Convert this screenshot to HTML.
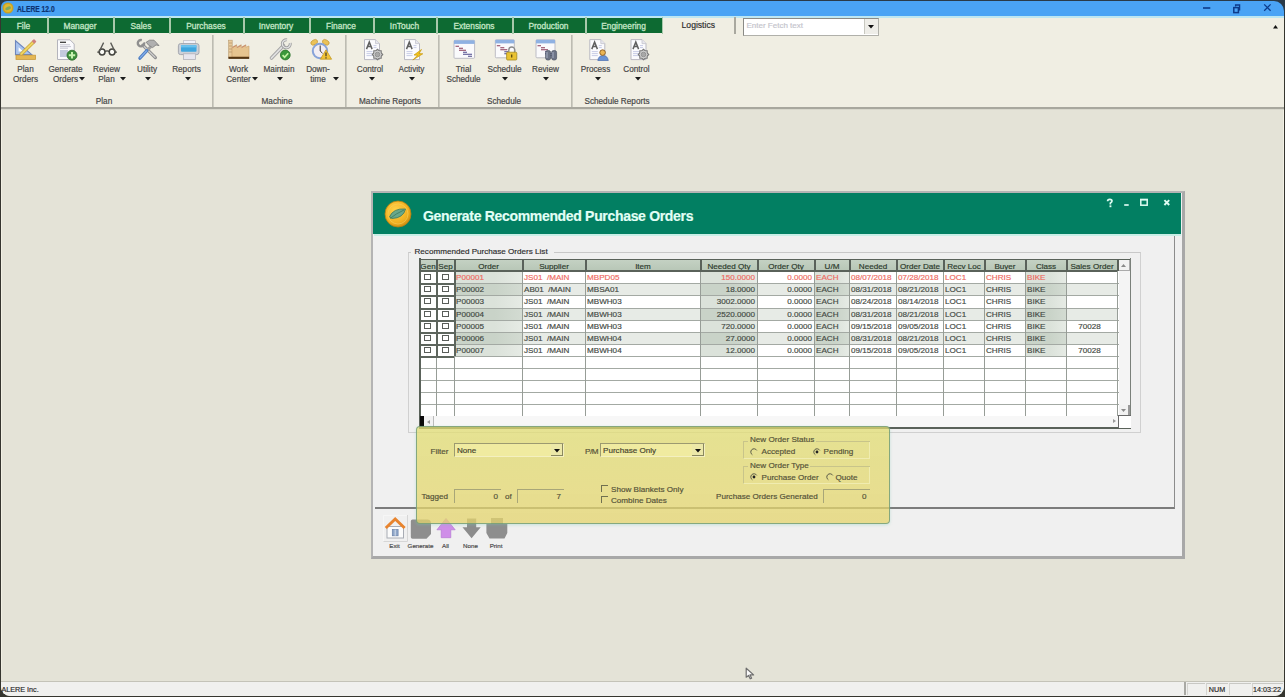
<!DOCTYPE html>
<html><head><meta charset="utf-8"><style>*{margin:0;padding:0;box-sizing:border-box}
html,body{width:1285px;height:697px;overflow:hidden}
body{position:relative;background:#e4e3d7;font-family:"Liberation Sans",sans-serif;font-size:8.2px;color:#333}
.a{position:absolute;white-space:nowrap;-webkit-text-stroke:0.18px currentColor}
svg{position:absolute;overflow:visible}
</style></head><body>
<div id="root" style="position:absolute;left:0;top:0;width:1285px;height:697px">
<div class="a" style="left:0px;top:0px;width:1285px;height:697px;background:#e4e3d7"></div>
<div class="a" style="left:0px;top:0px;width:1285px;height:697px;background:#35352f"></div>
<div class="a" style="left:1px;top:0px;width:1283px;height:697px;background:#e4e3d7;border-left:1px solid #f2f0e4;border-right:1px solid #f2f0e4"></div>
<div class="a" style="left:0px;top:0px;width:1285px;height:18px;background:#2a3a48"></div>
<div class="a" style="left:1px;top:1px;width:1283px;height:17px;background:#4aa3f5;border-top-left-radius:6px;border-top-right-radius:10px"></div>
<svg style="left:2px;top:2px" width="12" height="12" viewBox="0 0 12 12"><circle cx="6" cy="6" r="5.5" fill="#c9a227"/><circle cx="6" cy="6" r="4" fill="#e0b830"/><ellipse cx="6" cy="6.3" rx="3" ry="1.6" fill="#7fa860" transform="rotate(-20 6 6)"/></svg>
<div class="a" style="left:16.5px;top:3.50px;line-height:12px;font-size:8.2px;color:#0d3270;font-weight:bold;transform:scaleX(0.82);transform-origin:0 50%;">ALERE 12.0</div>
<svg style="left:1200px;top:3px" width="80" height="10" viewBox="0 0 80 10"><line x1="3" y1="5" x2="10.3" y2="5" stroke="#0d3a8a" stroke-width="1.6"/><rect x="33.8" y="4.6" width="4.6" height="5" fill="none" stroke="#0d3a8a" stroke-width="1.5"/><path d="M35.6 3.6 V2 H39.6 V6.8 H38.6" fill="none" stroke="#0d3a8a" stroke-width="1.3"/><path d="M64.2 1.4 L70.6 7.8 M70.6 1.4 L64.2 7.8" stroke="#0d3a8a" stroke-width="1.3"/></svg>
<div class="a" style="left:1px;top:16px;width:1283px;height:2px;background:#bde6f2"></div>
<div class="a" style="left:1px;top:18px;width:1283px;height:89px;background:#f0eee3"></div>
<div class="a" style="left:1px;top:18px;width:46px;height:15px;background:#0d6a32"></div>
<div class="a" style="left:-76.5px;width:200px;text-align:center;top:19.80px;line-height:12px;font-size:8.4px;color:#c4e6c6;-webkit-text-stroke:0.3px currentColor;">File</div>
<div class="a" style="left:48px;top:18px;width:65px;height:15px;background:#0d6a32"></div>
<div class="a" style="left:-20.0px;width:200px;text-align:center;top:19.80px;line-height:12px;font-size:8.4px;color:#c4e6c6;-webkit-text-stroke:0.3px currentColor;">Manager</div>
<div class="a" style="left:114px;top:18px;width:55px;height:15px;background:#0d6a32"></div>
<div class="a" style="left:41.0px;width:200px;text-align:center;top:19.80px;line-height:12px;font-size:8.4px;color:#c4e6c6;-webkit-text-stroke:0.3px currentColor;">Sales</div>
<div class="a" style="left:170px;top:18px;width:73px;height:15px;background:#0d6a32"></div>
<div class="a" style="left:106.0px;width:200px;text-align:center;top:19.80px;line-height:12px;font-size:8.4px;color:#c4e6c6;-webkit-text-stroke:0.3px currentColor;">Purchases</div>
<div class="a" style="left:244px;top:18px;width:65px;height:15px;background:#0d6a32"></div>
<div class="a" style="left:176.0px;width:200px;text-align:center;top:19.80px;line-height:12px;font-size:8.4px;color:#c4e6c6;-webkit-text-stroke:0.3px currentColor;">Inventory</div>
<div class="a" style="left:310px;top:18px;width:63px;height:15px;background:#0d6a32"></div>
<div class="a" style="left:241.0px;width:200px;text-align:center;top:19.80px;line-height:12px;font-size:8.4px;color:#c4e6c6;-webkit-text-stroke:0.3px currentColor;">Finance</div>
<div class="a" style="left:374px;top:18px;width:62px;height:15px;background:#0d6a32"></div>
<div class="a" style="left:304.5px;width:200px;text-align:center;top:19.80px;line-height:12px;font-size:8.4px;color:#c4e6c6;-webkit-text-stroke:0.3px currentColor;">InTouch</div>
<div class="a" style="left:437px;top:18px;width:75px;height:15px;background:#0d6a32"></div>
<div class="a" style="left:374.0px;width:200px;text-align:center;top:19.80px;line-height:12px;font-size:8.4px;color:#c4e6c6;-webkit-text-stroke:0.3px currentColor;">Extensions</div>
<div class="a" style="left:513px;top:18px;width:72px;height:15px;background:#0d6a32"></div>
<div class="a" style="left:448.5px;width:200px;text-align:center;top:19.80px;line-height:12px;font-size:8.4px;color:#c4e6c6;-webkit-text-stroke:0.3px currentColor;">Production</div>
<div class="a" style="left:586px;top:18px;width:76px;height:15px;background:#0d6a32"></div>
<div class="a" style="left:523.5px;width:200px;text-align:center;top:19.80px;line-height:12px;font-size:8.4px;color:#c4e6c6;-webkit-text-stroke:0.3px currentColor;">Engineering</div>
<div class="a" style="left:46.5px;top:17px;width:2px;height:17px;background:#a8c9ab"></div>
<div class="a" style="left:112.5px;top:17px;width:2px;height:17px;background:#a8c9ab"></div>
<div class="a" style="left:168.5px;top:17px;width:2px;height:17px;background:#a8c9ab"></div>
<div class="a" style="left:242.5px;top:17px;width:2px;height:17px;background:#a8c9ab"></div>
<div class="a" style="left:308.5px;top:17px;width:2px;height:17px;background:#a8c9ab"></div>
<div class="a" style="left:372.5px;top:17px;width:2px;height:17px;background:#a8c9ab"></div>
<div class="a" style="left:435.5px;top:17px;width:2px;height:17px;background:#a8c9ab"></div>
<div class="a" style="left:511.5px;top:17px;width:2px;height:17px;background:#a8c9ab"></div>
<div class="a" style="left:584.5px;top:17px;width:2px;height:17px;background:#a8c9ab"></div>
<div class="a" style="left:662px;top:17px;width:1px;height:17px;background:#a8c9ab"></div>
<div class="a" style="left:598.3px;width:200px;text-align:center;top:18.80px;line-height:12px;font-size:8.6px;color:#2e2e2e;">Logistics</div>
<div class="a" style="left:734px;top:17px;width:2px;height:17px;background:#a9a89f"></div>
<div class="a" style="left:743px;top:18px;width:136px;height:17.5px;background:#fff;border:1px solid #b0b0aa;border-top-color:#8a8a86;border-left-color:#8a8a86"></div>
<div class="a" style="left:746.5px;top:19.60px;line-height:12px;font-size:8px;color:#c4c4cc;">Enter Fetch text</div>
<div class="a" style="left:864px;top:19px;width:14px;height:15px;background:#eeede8;border-left:1px solid #c8c8c0"></div>
<svg style="left:868px;top:25px" width="6" height="4"><path d="M0 0H6L3 3.5Z" fill="#111"/></svg>
<svg style="left:1272.5px;top:24.8px" width="5" height="3.5"><path d="M0 3.5H5L2.5 0Z" fill="#111"/></svg>
<div class="a" style="left:1px;top:107px;width:1283px;height:2px;background:#a8a79e"></div>
<div class="a" style="left:1px;top:109px;width:1283px;height:1px;background:#d8d7cc"></div>
<div class="a" style="left:212px;top:35px;width:2px;height:72px;background:#cfcec4"></div>
<div class="a" style="left:212px;top:35px;width:1px;height:72px;background:#bdbcb2"></div>
<div class="a" style="left:345px;top:35px;width:2px;height:72px;background:#cfcec4"></div>
<div class="a" style="left:345px;top:35px;width:1px;height:72px;background:#bdbcb2"></div>
<div class="a" style="left:438px;top:35px;width:2px;height:72px;background:#cfcec4"></div>
<div class="a" style="left:438px;top:35px;width:1px;height:72px;background:#bdbcb2"></div>
<div class="a" style="left:571px;top:35px;width:2px;height:72px;background:#cfcec4"></div>
<div class="a" style="left:571px;top:35px;width:1px;height:72px;background:#bdbcb2"></div>
<div class="a" style="left:-74.5px;width:200px;text-align:center;top:64.40px;line-height:12px;font-size:8.2px;color:#464646;">Plan</div>
<div class="a" style="left:-74.5px;width:200px;text-align:center;top:74.30px;line-height:12px;font-size:8.2px;color:#464646;">Orders</div>
<div class="a" style="left:-34.5px;width:200px;text-align:center;top:64.40px;line-height:12px;font-size:8.2px;color:#464646;">Generate</div>
<div class="a" style="left:-34.5px;width:200px;text-align:center;top:74.30px;line-height:12px;font-size:8.2px;color:#464646;">Orders</div>
<div class="a" style="left:6.5px;width:200px;text-align:center;top:64.40px;line-height:12px;font-size:8.2px;color:#464646;">Review</div>
<div class="a" style="left:6.5px;width:200px;text-align:center;top:74.30px;line-height:12px;font-size:8.2px;color:#464646;">Plan</div>
<div class="a" style="left:47px;width:200px;text-align:center;top:64.40px;line-height:12px;font-size:8.2px;color:#464646;">Utility</div>
<div class="a" style="left:86.5px;width:200px;text-align:center;top:64.40px;line-height:12px;font-size:8.2px;color:#464646;">Reports</div>
<div class="a" style="left:138.5px;width:200px;text-align:center;top:64.40px;line-height:12px;font-size:8.2px;color:#464646;">Work</div>
<div class="a" style="left:138.5px;width:200px;text-align:center;top:74.30px;line-height:12px;font-size:8.2px;color:#464646;">Center</div>
<div class="a" style="left:179px;width:200px;text-align:center;top:64.40px;line-height:12px;font-size:8.2px;color:#464646;">Maintain</div>
<div class="a" style="left:218px;width:200px;text-align:center;top:64.40px;line-height:12px;font-size:8.2px;color:#464646;">Down-</div>
<div class="a" style="left:218px;width:200px;text-align:center;top:74.30px;line-height:12px;font-size:8.2px;color:#464646;">time</div>
<div class="a" style="left:270px;width:200px;text-align:center;top:64.40px;line-height:12px;font-size:8.2px;color:#464646;">Control</div>
<div class="a" style="left:311.5px;width:200px;text-align:center;top:64.40px;line-height:12px;font-size:8.2px;color:#464646;">Activity</div>
<div class="a" style="left:363.5px;width:200px;text-align:center;top:64.40px;line-height:12px;font-size:8.2px;color:#464646;">Trial</div>
<div class="a" style="left:363.5px;width:200px;text-align:center;top:74.30px;line-height:12px;font-size:8.2px;color:#464646;">Schedule</div>
<div class="a" style="left:404.5px;width:200px;text-align:center;top:64.40px;line-height:12px;font-size:8.2px;color:#464646;">Schedule</div>
<div class="a" style="left:445.5px;width:200px;text-align:center;top:64.40px;line-height:12px;font-size:8.2px;color:#464646;">Review</div>
<div class="a" style="left:495.5px;width:200px;text-align:center;top:64.40px;line-height:12px;font-size:8.2px;color:#464646;">Process</div>
<div class="a" style="left:536.5px;width:200px;text-align:center;top:64.40px;line-height:12px;font-size:8.2px;color:#464646;">Control</div>
<svg style="left:79px;top:77.0px" width="6" height="4"><path d="M0 0H6L3 3.5Z" fill="#1a1a1a"/></svg>
<svg style="left:120px;top:77.0px" width="6" height="4"><path d="M0 0H6L3 3.5Z" fill="#1a1a1a"/></svg>
<svg style="left:144.5px;top:77.0px" width="6" height="4"><path d="M0 0H6L3 3.5Z" fill="#1a1a1a"/></svg>
<svg style="left:185px;top:77.0px" width="6" height="4"><path d="M0 0H6L3 3.5Z" fill="#1a1a1a"/></svg>
<svg style="left:251.7px;top:77.0px" width="6" height="4"><path d="M0 0H6L3 3.5Z" fill="#1a1a1a"/></svg>
<svg style="left:276.5px;top:77.0px" width="6" height="4"><path d="M0 0H6L3 3.5Z" fill="#1a1a1a"/></svg>
<svg style="left:333px;top:77.0px" width="6" height="4"><path d="M0 0H6L3 3.5Z" fill="#1a1a1a"/></svg>
<svg style="left:368.5px;top:77.0px" width="6" height="4"><path d="M0 0H6L3 3.5Z" fill="#1a1a1a"/></svg>
<svg style="left:409px;top:77.0px" width="6" height="4"><path d="M0 0H6L3 3.5Z" fill="#1a1a1a"/></svg>
<svg style="left:502px;top:77.0px" width="6" height="4"><path d="M0 0H6L3 3.5Z" fill="#1a1a1a"/></svg>
<svg style="left:542.5px;top:77.0px" width="6" height="4"><path d="M0 0H6L3 3.5Z" fill="#1a1a1a"/></svg>
<svg style="left:594.5px;top:77.0px" width="6" height="4"><path d="M0 0H6L3 3.5Z" fill="#1a1a1a"/></svg>
<svg style="left:634.5px;top:77.0px" width="6" height="4"><path d="M0 0H6L3 3.5Z" fill="#1a1a1a"/></svg>
<div class="a" style="left:4px;width:200px;text-align:center;top:95.60px;line-height:12px;font-size:8.2px;color:#464646;">Plan</div>
<div class="a" style="left:177px;width:200px;text-align:center;top:95.60px;line-height:12px;font-size:8.2px;color:#464646;">Machine</div>
<div class="a" style="left:290px;width:200px;text-align:center;top:95.60px;line-height:12px;font-size:8.2px;color:#464646;">Machine Reports</div>
<div class="a" style="left:404px;width:200px;text-align:center;top:95.60px;line-height:12px;font-size:8.2px;color:#464646;">Schedule</div>
<div class="a" style="left:517px;width:200px;text-align:center;top:95.60px;line-height:12px;font-size:8.2px;color:#464646;">Schedule Reports</div>
<svg style="left:0;top:0" width="700" height="70" viewBox="0 0 700 70"><path d="M15.5 40.8 L15.5 54.6 L31.8 54.6 Z" fill="#a9c4ee" stroke="#6d86bd" stroke-width="1.1"/><path d="M18.6 47.2 L18.6 51.6 L23.2 51.6 Z" fill="#fff"/><path d="M34.3 41.2 L20.6 54.8" stroke="#caa032" stroke-width="3.4"/><path d="M34.3 41.2 L20.6 54.8" stroke="#eed564" stroke-width="2"/><path d="M35.2 40.3 L33 42.5" stroke="#cf8080" stroke-width="3.4"/><rect x="16" y="55.2" width="19.5" height="4.2" fill="#e5b753" stroke="#c99a3c" stroke-width="0.8"/><path d="M57.5 39.8 H70 L74.2 44 V59.5 H57.5 Z" fill="#fafafc" stroke="#b4b4bc" stroke-width="1"/><path d="M60 42.3 H66" stroke="#3e3e3e" stroke-width="1.3"/><path d="M60 44.8 H70 M60 46.6 H71 M60 48.2 H68" stroke="#c0c0cc" stroke-width="0.9"/><rect x="60" y="50" width="8" height="7" fill="#c3cadd"/><circle cx="72" cy="55.2" r="5" fill="#3b8d3b" stroke="#2b6d2b" stroke-width="0.8"/><path d="M68.8 55.2 H75.2 M72 52 V58.4" stroke="#c6f2b0" stroke-width="2"/><circle cx="102.1" cy="52" r="2.9" fill="#fbfbf6" stroke="#454540" stroke-width="1.5"/><circle cx="112.1" cy="52" r="2.9" fill="#fbfbf6" stroke="#454540" stroke-width="1.5"/><path d="M105 51.5 Q107.1 50.2 109.2 51.5" fill="none" stroke="#454540" stroke-width="1.3"/><path d="M99.2 51.6 L103.6 42.6 M115 51.6 L110.6 42.6" stroke="#5a5a55" stroke-width="1.3"/><path d="M97.3 52.2 H99.4 M114.8 52.2 H116.9" stroke="#454540" stroke-width="1.3"/><path d="M142.8 45.2 L155.4 57.6" stroke="#8e8e8e" stroke-width="3.2" stroke-linecap="round"/><path d="M142.8 45.2 L155.4 57.6" stroke="#d2d2d2" stroke-width="1.3"/><path d="M144.09 42.37 A3.2 3.2 0 1 1 141.83 40.11" fill="none" stroke="#8f8f8f" stroke-width="2.4"/><path d="M151 46.5 L146.6 50.9" stroke="#a2a2a2" stroke-width="3"/><path d="M146.8 50.7 L139.9 58.2" stroke="#4f7fc4" stroke-width="3.2" stroke-linecap="round"/><path d="M146.8 50.7 L139.9 58.2" stroke="#86b0ea" stroke-width="1.2"/><path d="M146.2 42.2 L149.6 40.2 L154 40.2 L159 45.6 L156 44.9 L152.6 47.6 L148.6 45.2 Z" fill="#b0b0b0" stroke="#828282" stroke-width="0.9"/><rect x="183.5" y="40.6" width="12" height="4.5" fill="#f2f2fa" stroke="#c2c2ca" stroke-width="0.8"/><rect x="178.4" y="43.6" width="20.6" height="11" rx="2.2" fill="#cdd1d8" stroke="#9ea2aa" stroke-width="0.9"/><rect x="181" y="45.2" width="15.5" height="6.5" rx="0.8" fill="#3fa6de"/><rect x="181" y="45.2" width="15.5" height="2.2" fill="#6cc2ee"/><rect x="183.5" y="53.8" width="12" height="5.6" fill="#e6e6ee" stroke="#b2b2ba" stroke-width="0.8"/><rect x="228.6" y="40.2" width="3.6" height="17" fill="#e9cb9c" stroke="#b89a70" stroke-width="0.6"/><path d="M229 43 H232 M229 46 H232 M229 49 H232 M229 52 H232" stroke="#a88860" stroke-width="0.6"/><path d="M232 57 V47.2 L236.6 44.8 V47.2 L241.2 44.8 V47.2 L245.8 44.8 V47.2 L249 46 V57 Z" fill="#e6c48f" stroke="#c9a06a" stroke-width="0.6"/><path d="M232.5 47.6 L236.6 45.3 M237.1 47.6 L241.2 45.3 M241.7 47.6 L245.8 45.3" stroke="#c88a70" stroke-width="1"/><rect x="228.4" y="56.8" width="20.8" height="2.1" fill="#553612"/><path d="M271.5 58 L283.5 45.5" stroke="#a5a5a5" stroke-width="3.6" stroke-linecap="round"/><path d="M271.5 58 L283.5 45.5" stroke="#e2e2e2" stroke-width="1.8" stroke-linecap="round"/><path d="M290.24 43.11 A4 4 0 1 1 286.99 39.86" fill="none" stroke="#a0a0a0" stroke-width="3"/><path d="M290.24 43.11 A4 4 0 1 1 286.99 39.86" fill="none" stroke="#e4e4e4" stroke-width="1.2"/><circle cx="285.3" cy="55" r="4.9" fill="#3a973a" stroke="#2d752d" stroke-width="0.8"/><path d="M282.6 55.2 L284.6 57.2 L288.2 53.2" fill="none" stroke="#c2f2a2" stroke-width="1.7"/><ellipse cx="314.2" cy="42.3" rx="3.6" ry="2.4" fill="#ebc259" stroke="#c59a3a" stroke-width="0.7" transform="rotate(-30 314.2 42.3)"/><ellipse cx="325.8" cy="42.3" rx="3.6" ry="2.4" fill="#ebc259" stroke="#c59a3a" stroke-width="0.7" transform="rotate(30 325.8 42.3)"/><circle cx="320" cy="51" r="7.2" fill="#f3eef3" stroke="#88a3d8" stroke-width="2"/><path d="M320.2 51 V45.5 M320.2 51 L322.5 53.2" stroke="#333" stroke-width="1"/><path d="M326 49.8 L331.6 59.2 H320.4 Z" fill="#f1c233" stroke="#c49b22" stroke-width="0.8"/><path d="M326 52.5 V56.2 M326 57.3 V58.4" stroke="#2a2a2a" stroke-width="1.1"/><path d="M364.5 39.6 H375.5 L379.5 43.6 V59.6 H364.5 Z" fill="#fbfbfd" stroke="#b9b9c2" stroke-width="1"/><path d="M375.5 39.6 V43.6 H379.5" fill="#e6e6ee" stroke="#c4c4cc" stroke-width="0.8"/><path d="M366.5 49.1 L369.3 42.1 L372.1 49.1 M367.5 46.6 H371.1" fill="none" stroke="#606060" stroke-width="1.5"/><path d="M373.5 45.6 H376.5 M373.5 47.6 H376.5 M366.5 51.6 H372.5 M366.5 53.6 H372.5 M366.5 55.6 H372.5" stroke="#c8cde6" stroke-width="1"/><polygon points="382.70,54.50 381.25,56.05 381.18,58.18 379.05,58.25 377.50,59.70 375.95,58.25 373.82,58.18 373.75,56.05 372.30,54.50 373.75,52.95 373.82,50.82 375.95,50.75 377.50,49.30 379.05,50.75 381.18,50.82 381.25,52.95" fill="#d4d4d4" stroke="#7a7a7a" stroke-width="1.1"/><circle cx="377.5" cy="54.5" r="2.34" fill="#a8a8a8" stroke="#8a8a8a" stroke-width="0.8"/><path d="M404.5 39.6 H415.5 L419.5 43.6 V59.6 H404.5 Z" fill="#fbfbfd" stroke="#b9b9c2" stroke-width="1"/><path d="M415.5 39.6 V43.6 H419.5" fill="#e6e6ee" stroke="#c4c4cc" stroke-width="0.8"/><path d="M406.5 49.1 L409.3 42.1 L412.1 49.1 M407.5 46.6 H411.1" fill="none" stroke="#606060" stroke-width="1.5"/><path d="M413.5 45.6 H416.5 M413.5 47.6 H416.5 M406.5 51.6 H412.5 M406.5 53.6 H412.5 M406.5 55.6 H412.5" stroke="#c8cde6" stroke-width="1"/><path d="M421.5 49.5 L414 55 L417.5 55.3 L412.8 60 L422.8 53.8 L419 53.6 Z" fill="#f1c21c" stroke="#c89a10" stroke-width="0.7"/><rect x="454" y="40.3" width="20.6" height="18" rx="1" fill="#fafafc" stroke="#bcbcc4" stroke-width="1"/><rect x="454" y="40.3" width="20.6" height="3.6" fill="#8fb1e2"/><path d="M455.5 46.3 H459 M459 48.3 H463 M459 50.3 H466" stroke="#8a3a55" stroke-width="1.1"/><path d="M463 52.3 H467 M463 54.3 H472 M468 56.3 H472" stroke="#4e4a8a" stroke-width="1.1"/><rect x="495.3" y="39.8" width="19" height="18" rx="1" fill="#fafafc" stroke="#bcbcc4" stroke-width="1"/><rect x="495.3" y="39.8" width="19" height="3.6" fill="#8fb1e2"/><path d="M496.8 45.8 H500.3 M500.3 47.8 H504.3 M500.3 49.8 H507.3" stroke="#8a3a55" stroke-width="1.1"/><path d="M504.3 51.8 H508.3 M504.3 53.8 H513.3 M509.3 55.8 H513.3" stroke="#4e4a8a" stroke-width="1.1"/><path d="M508.8 52.5 V50 A3 3 0 0 1 514.8 50 V52.5" fill="none" stroke="#8a8a8a" stroke-width="1.4"/><rect x="506.6" y="52.2" width="10.2" height="7.8" rx="1" fill="#e9c232" stroke="#a78a1e" stroke-width="0.8"/><path d="M511.7 54.6 V57.6" stroke="#5a4a10" stroke-width="1.3"/><rect x="536" y="39.8" width="19" height="18" rx="1" fill="#fafafc" stroke="#bcbcc4" stroke-width="1"/><rect x="536" y="39.8" width="19" height="3.6" fill="#8fb1e2"/><path d="M537.5 45.8 H541 M541 47.8 H545 M541 49.8 H548" stroke="#8a3a55" stroke-width="1.1"/><path d="M545 51.8 H549 M545 53.8 H554 M550 55.8 H554" stroke="#4e4a8a" stroke-width="1.1"/><rect x="545.6" y="50.5" width="5" height="9.5" rx="2" fill="#6d7486" stroke="#4e5464" stroke-width="0.7"/><rect x="551.6" y="50.5" width="5" height="9.5" rx="2" fill="#6d7486" stroke="#4e5464" stroke-width="0.7"/><path d="M547 52 V58 M553 52 V58" stroke="#a8b0c4" stroke-width="1"/><path d="M589.8 39.6 H600.8 L604.8 43.6 V59.6 H589.8 Z" fill="#fbfbfd" stroke="#b9b9c2" stroke-width="1"/><path d="M600.8 39.6 V43.6 H604.8" fill="#e6e6ee" stroke="#c4c4cc" stroke-width="0.8"/><path d="M591.8 49.1 L594.5999999999999 42.1 L597.4 49.1 M592.8 46.6 H596.4" fill="none" stroke="#606060" stroke-width="1.5"/><path d="M598.8 45.6 H601.8 M598.8 47.6 H601.8 M591.8 51.6 H597.8 M591.8 53.6 H597.8 M591.8 55.6 H597.8" stroke="#c8cde6" stroke-width="1"/><path d="M597.8 60.5 Q598.5 55.6 603 55.6 Q607.5 55.6 608.3 60.5 Z" fill="#6a92d4" stroke="#4a6eb0" stroke-width="0.7"/><circle cx="602.6" cy="52.6" r="2.8" fill="#ebb553" stroke="#8a5a22" stroke-width="0.9"/><path d="M631 39.6 H642 L646 43.6 V59.6 H631 Z" fill="#fbfbfd" stroke="#b9b9c2" stroke-width="1"/><path d="M642 39.6 V43.6 H646" fill="#e6e6ee" stroke="#c4c4cc" stroke-width="0.8"/><path d="M633 49.1 L635.8 42.1 L638.6 49.1 M634 46.6 H637.6" fill="none" stroke="#606060" stroke-width="1.5"/><path d="M640 45.6 H643 M640 47.6 H643 M633 51.6 H639 M633 53.6 H639 M633 55.6 H639" stroke="#c8cde6" stroke-width="1"/><polygon points="648.70,54.50 647.25,56.05 647.18,58.18 645.05,58.25 643.50,59.70 641.95,58.25 639.82,58.18 639.75,56.05 638.30,54.50 639.75,52.95 639.82,50.82 641.95,50.75 643.50,49.30 645.05,50.75 647.18,50.82 647.25,52.95" fill="#d4d4d4" stroke="#7a7a7a" stroke-width="1.1"/><circle cx="643.5" cy="54.5" r="2.34" fill="#a8a8a8" stroke="#8a8a8a" stroke-width="0.8"/></svg>
<div class="a" style="left:0px;top:670px;width:1285px;height:27px;background:#35352f"></div>
<div class="a" style="left:1px;top:670px;width:1283px;height:26px;background:#e4e3d7;border-bottom-left-radius:9px;border-bottom-right-radius:9px"></div>
<div class="a" style="left:1px;top:681px;width:1283px;height:15px;background:#f0f0ee;border-top:1px solid #c4c3b8;border-bottom-left-radius:9px;border-bottom-right-radius:9px"></div>
<div class="a" style="left:1.5px;top:684.30px;line-height:12px;font-size:7.2px;color:#2a2a2a;">ALERE Inc.</div>
<div class="a" style="left:1184px;top:682px;width:2px;height:13px;background:#a9a9a4"></div>
<div class="a" style="left:1187px;top:683px;width:18px;height:12px;border-top:1px solid #c8c8c4;border-left:1px solid #d4d4d0"></div>
<div class="a" style="left:1206px;top:683px;width:22px;height:12px;border-top:1px solid #c8c8c4;border-left:1px solid #d4d4d0"></div>
<div class="a" style="left:1229px;top:683px;width:22px;height:12px;border-top:1px solid #c8c8c4;border-left:1px solid #d4d4d0"></div>
<div class="a" style="left:1252px;top:683px;width:31px;height:12px;border-top:1px solid #c8c8c4;border-left:1px solid #d4d4d0"></div>
<div class="a" style="left:1117px;width:200px;text-align:center;top:684.30px;line-height:12px;font-size:7.2px;color:#2a2a2a;">NUM</div>
<div class="a" style="left:1167px;width:200px;text-align:center;top:684.30px;line-height:12px;font-size:7.2px;color:#2a2a2a;">14:03:22</div>
<div class="a" style="left:371px;top:191px;width:814px;height:368px;background:#f0f0f0;border:2px solid #b4b4b4;border-right-width:3px;border-bottom-width:3px;border-right-color:#a8a8a8;border-bottom-color:#a8a8a8"></div>
<div class="a" style="left:373px;top:193px;width:808px;height:41px;background:#027f62"></div>
<div class="a" style="left:374px;top:234px;width:807px;height:2px;background:#c8eee6"></div>
<svg style="left:384px;top:200px" width="28" height="28" viewBox="0 0 28 28"><defs><radialGradient id="lg" cx="0.4" cy="0.35" r="0.7"><stop offset="0" stop-color="#ffd24a"/><stop offset="0.7" stop-color="#f0b020"/><stop offset="1" stop-color="#c98a10"/></radialGradient></defs><circle cx="14" cy="14" r="13" fill="url(#lg)" stroke="#b88010" stroke-width="0.8"/><circle cx="14" cy="14" r="10" fill="none" stroke="#f8d060" stroke-width="0.8" opacity="0.7"/><path d="M5.5 17 Q9 8 21.5 9 Q19.5 18 8 18.5 Z" fill="#6aa88a" stroke="#3c7a5e" stroke-width="0.8"/><path d="M6 18.5 Q12 13.5 20 10" fill="none" stroke="#3c7a5e" stroke-width="0.8"/></svg>
<div class="a" style="left:423px;top:210.20px;line-height:12px;font-size:14px;color:#e2fff6;font-weight:bold;letter-spacing:-0.32px;">Generate Recommended Purchase Orders</div>
<svg style="left:1100px;top:196px" width="80" height="14" viewBox="0 0 80 14"><path d="M7.6 5.2 Q7.6 3.3 9.8 3.3 Q12 3.3 12 5.1 Q12 6.3 10.4 7 V8.6" fill="none" stroke="#dffcf2" stroke-width="1.7"/><rect x="9.5" y="9.4" width="1.9" height="1.8" fill="#dffcf2"/><rect x="24.2" y="8.2" width="4.5" height="1.6" fill="#e8fff8"/><rect x="40.8" y="3.6" width="6.4" height="5.6" fill="none" stroke="#dffcf2" stroke-width="1.5"/><rect x="40" y="2.8" width="8" height="1.6" fill="#dffcf2"/><path d="M64.4 4.2 L69.2 9 M69.2 4.2 L64.4 9" stroke="#dffcf2" stroke-width="1.9"/></svg>
<div class="a" style="left:375px;top:236px;width:800px;height:273px;border-right:1.5px solid #8c8c8c;border-bottom:2px solid #7c7c7c"></div>
<div class="a" style="left:408px;top:252px;width:733px;height:181px;border:1px solid #d0d0d0;border-top-color:#c8c8c8"></div>
<div class="a" style="left:411px;top:246px;width:143px;height:12px;background:#f0f0f0"></div>
<div class="a" style="left:414.5px;top:246.20px;line-height:12px;font-size:8.1px;color:#2f2f2f;">Recommended Purchase Orders List</div>
<div class="a" style="left:419px;top:259px;width:712px;height:169px;background:#ffffff"></div>
<div class="a" style="left:419px;top:259px;width:698px;height:12px;background:linear-gradient(#c5d2c4,#b7c6b6)"></div>
<div class="a" style="left:328.0px;width:200px;text-align:center;top:261.40px;line-height:12px;font-size:8.1px;color:#2c3a2c;">Gen</div>
<div class="a" style="left:345.5px;width:200px;text-align:center;top:261.40px;line-height:12px;font-size:8.1px;color:#2c3a2c;">Sep</div>
<div class="a" style="left:388.5px;width:200px;text-align:center;top:261.40px;line-height:12px;font-size:8.1px;color:#2c3a2c;">Order</div>
<div class="a" style="left:454.0px;width:200px;text-align:center;top:261.40px;line-height:12px;font-size:8.1px;color:#2c3a2c;">Supplier</div>
<div class="a" style="left:543.0px;width:200px;text-align:center;top:261.40px;line-height:12px;font-size:8.1px;color:#2c3a2c;">Item</div>
<div class="a" style="left:629.0px;width:200px;text-align:center;top:261.40px;line-height:12px;font-size:8.1px;color:#2c3a2c;">Needed Qty</div>
<div class="a" style="left:686.0px;width:200px;text-align:center;top:261.40px;line-height:12px;font-size:8.1px;color:#2c3a2c;">Order Qty</div>
<div class="a" style="left:732.0px;width:200px;text-align:center;top:261.40px;line-height:12px;font-size:8.1px;color:#2c3a2c;">U/M</div>
<div class="a" style="left:773.0px;width:200px;text-align:center;top:261.40px;line-height:12px;font-size:8.1px;color:#2c3a2c;">Needed</div>
<div class="a" style="left:820.0px;width:200px;text-align:center;top:261.40px;line-height:12px;font-size:8.1px;color:#2c3a2c;">Order Date</div>
<div class="a" style="left:864.0px;width:200px;text-align:center;top:261.40px;line-height:12px;font-size:8.1px;color:#2c3a2c;">Recv Loc</div>
<div class="a" style="left:905.0px;width:200px;text-align:center;top:261.40px;line-height:12px;font-size:8.1px;color:#2c3a2c;">Buyer</div>
<div class="a" style="left:946.0px;width:200px;text-align:center;top:261.40px;line-height:12px;font-size:8.1px;color:#2c3a2c;">Class</div>
<div class="a" style="left:992.0px;width:200px;text-align:center;top:261.40px;line-height:12px;font-size:8.1px;color:#2c3a2c;">Sales Order</div>
<div class="a" style="left:454px;top:271px;width:68px;height:12px;background:linear-gradient(90deg,#dbe2da,#dbe2da 60%,#e6ebe5)"></div>
<div class="a" style="left:1025px;top:271px;width:41px;height:12px;background:linear-gradient(90deg,#dbe2da,#dbe2da 60%,#e6ebe5)"></div>
<div class="a" style="left:700px;top:271px;width:57px;height:12px;background:linear-gradient(90deg,#dbe2da,#dbe2da 60%,#e6ebe5)"></div>
<div class="a" style="left:814px;top:271px;width:35px;height:12px;background:linear-gradient(90deg,#dbe2da,#dbe2da 60%,#e6ebe5)"></div>
<div class="a" style="left:454px;top:283px;width:663px;height:12px;background:#e7ebe6"></div>
<div class="a" style="left:454px;top:283px;width:68px;height:12px;background:linear-gradient(90deg,#c9d3c8,#c9d3c8 60%,#d3dbd2)"></div>
<div class="a" style="left:1025px;top:283px;width:41px;height:12px;background:linear-gradient(90deg,#c9d3c8,#c9d3c8 60%,#d3dbd2)"></div>
<div class="a" style="left:700px;top:283px;width:57px;height:12px;background:linear-gradient(90deg,#c9d3c8,#c9d3c8 60%,#d3dbd2)"></div>
<div class="a" style="left:814px;top:283px;width:35px;height:12px;background:linear-gradient(90deg,#c9d3c8,#c9d3c8 60%,#d3dbd2)"></div>
<div class="a" style="left:454px;top:295px;width:68px;height:13px;background:linear-gradient(90deg,#dbe2da,#dbe2da 60%,#e6ebe5)"></div>
<div class="a" style="left:1025px;top:295px;width:41px;height:13px;background:linear-gradient(90deg,#dbe2da,#dbe2da 60%,#e6ebe5)"></div>
<div class="a" style="left:700px;top:295px;width:57px;height:13px;background:linear-gradient(90deg,#dbe2da,#dbe2da 60%,#e6ebe5)"></div>
<div class="a" style="left:814px;top:295px;width:35px;height:13px;background:linear-gradient(90deg,#dbe2da,#dbe2da 60%,#e6ebe5)"></div>
<div class="a" style="left:454px;top:308px;width:663px;height:12px;background:#e7ebe6"></div>
<div class="a" style="left:454px;top:308px;width:68px;height:12px;background:linear-gradient(90deg,#c9d3c8,#c9d3c8 60%,#d3dbd2)"></div>
<div class="a" style="left:1025px;top:308px;width:41px;height:12px;background:linear-gradient(90deg,#c9d3c8,#c9d3c8 60%,#d3dbd2)"></div>
<div class="a" style="left:700px;top:308px;width:57px;height:12px;background:linear-gradient(90deg,#c9d3c8,#c9d3c8 60%,#d3dbd2)"></div>
<div class="a" style="left:814px;top:308px;width:35px;height:12px;background:linear-gradient(90deg,#c9d3c8,#c9d3c8 60%,#d3dbd2)"></div>
<div class="a" style="left:454px;top:320px;width:68px;height:12px;background:linear-gradient(90deg,#dbe2da,#dbe2da 60%,#e6ebe5)"></div>
<div class="a" style="left:1025px;top:320px;width:41px;height:12px;background:linear-gradient(90deg,#dbe2da,#dbe2da 60%,#e6ebe5)"></div>
<div class="a" style="left:700px;top:320px;width:57px;height:12px;background:linear-gradient(90deg,#dbe2da,#dbe2da 60%,#e6ebe5)"></div>
<div class="a" style="left:814px;top:320px;width:35px;height:12px;background:linear-gradient(90deg,#dbe2da,#dbe2da 60%,#e6ebe5)"></div>
<div class="a" style="left:454px;top:332px;width:663px;height:12px;background:#e7ebe6"></div>
<div class="a" style="left:454px;top:332px;width:68px;height:12px;background:linear-gradient(90deg,#c9d3c8,#c9d3c8 60%,#d3dbd2)"></div>
<div class="a" style="left:1025px;top:332px;width:41px;height:12px;background:linear-gradient(90deg,#c9d3c8,#c9d3c8 60%,#d3dbd2)"></div>
<div class="a" style="left:700px;top:332px;width:57px;height:12px;background:linear-gradient(90deg,#c9d3c8,#c9d3c8 60%,#d3dbd2)"></div>
<div class="a" style="left:814px;top:332px;width:35px;height:12px;background:linear-gradient(90deg,#c9d3c8,#c9d3c8 60%,#d3dbd2)"></div>
<div class="a" style="left:454px;top:344px;width:68px;height:12px;background:linear-gradient(90deg,#dbe2da,#dbe2da 60%,#e6ebe5)"></div>
<div class="a" style="left:1025px;top:344px;width:41px;height:12px;background:linear-gradient(90deg,#dbe2da,#dbe2da 60%,#e6ebe5)"></div>
<div class="a" style="left:700px;top:344px;width:57px;height:12px;background:linear-gradient(90deg,#dbe2da,#dbe2da 60%,#e6ebe5)"></div>
<div class="a" style="left:814px;top:344px;width:35px;height:12px;background:linear-gradient(90deg,#dbe2da,#dbe2da 60%,#e6ebe5)"></div>
<div class="a" style="left:424px;top:274px;width:7px;height:6px;border:1.3px solid #5a5e5a;background:#fff"></div>
<div class="a" style="left:442px;top:274px;width:7px;height:6px;border:1.3px solid #5a5e5a;background:#fff"></div>
<div class="a" style="left:456px;top:271.90px;line-height:12px;font-size:8.1px;color:#ee6a62;">P00001</div>
<div class="a" style="left:524px;top:271.90px;line-height:12px;font-size:8.1px;color:#ee6a62;">JS01&nbsp;&nbsp;/MAIN</div>
<div class="a" style="left:587px;top:271.90px;line-height:12px;font-size:8.1px;color:#ee6a62;">MBPD05</div>
<div class="a" style="left:455px;width:300px;text-align:right;top:271.90px;line-height:12px;font-size:8.1px;color:#ee6a62;">150.0000</div>
<div class="a" style="left:512px;width:300px;text-align:right;top:271.90px;line-height:12px;font-size:8.1px;color:#ee6a62;">0.0000</div>
<div class="a" style="left:816px;top:271.90px;line-height:12px;font-size:8.1px;color:#ee6a62;">EACH</div>
<div class="a" style="left:851px;top:271.90px;line-height:12px;font-size:8.1px;color:#ee6a62;">08/07/2018</div>
<div class="a" style="left:898px;top:271.90px;line-height:12px;font-size:8.1px;color:#ee6a62;">07/28/2018</div>
<div class="a" style="left:945px;top:271.90px;line-height:12px;font-size:8.1px;color:#ee6a62;">LOC1</div>
<div class="a" style="left:986px;top:271.90px;line-height:12px;font-size:8.1px;color:#ee6a62;">CHRIS</div>
<div class="a" style="left:1027px;top:271.90px;line-height:12px;font-size:8.1px;color:#ee6a62;">BIKE</div>
<div class="a" style="left:424px;top:286px;width:7px;height:6px;border:1.3px solid #5a5e5a;background:#fff"></div>
<div class="a" style="left:442px;top:286px;width:7px;height:6px;border:1.3px solid #5a5e5a;background:#fff"></div>
<div class="a" style="left:456px;top:283.90px;line-height:12px;font-size:8.1px;color:#444a44;">P00002</div>
<div class="a" style="left:524px;top:283.90px;line-height:12px;font-size:8.1px;color:#444a44;">AB01&nbsp;&nbsp;/MAIN</div>
<div class="a" style="left:587px;top:283.90px;line-height:12px;font-size:8.1px;color:#444a44;">MBSA01</div>
<div class="a" style="left:455px;width:300px;text-align:right;top:283.90px;line-height:12px;font-size:8.1px;color:#444a44;">18.0000</div>
<div class="a" style="left:512px;width:300px;text-align:right;top:283.90px;line-height:12px;font-size:8.1px;color:#444a44;">0.0000</div>
<div class="a" style="left:816px;top:283.90px;line-height:12px;font-size:8.1px;color:#444a44;">EACH</div>
<div class="a" style="left:851px;top:283.90px;line-height:12px;font-size:8.1px;color:#444a44;">08/31/2018</div>
<div class="a" style="left:898px;top:283.90px;line-height:12px;font-size:8.1px;color:#444a44;">08/21/2018</div>
<div class="a" style="left:945px;top:283.90px;line-height:12px;font-size:8.1px;color:#444a44;">LOC1</div>
<div class="a" style="left:986px;top:283.90px;line-height:12px;font-size:8.1px;color:#444a44;">CHRIS</div>
<div class="a" style="left:1027px;top:283.90px;line-height:12px;font-size:8.1px;color:#444a44;">BIKE</div>
<div class="a" style="left:424px;top:298px;width:7px;height:6px;border:1.3px solid #5a5e5a;background:#fff"></div>
<div class="a" style="left:442px;top:298px;width:7px;height:6px;border:1.3px solid #5a5e5a;background:#fff"></div>
<div class="a" style="left:456px;top:296.40px;line-height:12px;font-size:8.1px;color:#444a44;">P00003</div>
<div class="a" style="left:524px;top:296.40px;line-height:12px;font-size:8.1px;color:#444a44;">JS01&nbsp;&nbsp;/MAIN</div>
<div class="a" style="left:587px;top:296.40px;line-height:12px;font-size:8.1px;color:#444a44;">MBWH03</div>
<div class="a" style="left:455px;width:300px;text-align:right;top:296.40px;line-height:12px;font-size:8.1px;color:#444a44;">3002.0000</div>
<div class="a" style="left:512px;width:300px;text-align:right;top:296.40px;line-height:12px;font-size:8.1px;color:#444a44;">0.0000</div>
<div class="a" style="left:816px;top:296.40px;line-height:12px;font-size:8.1px;color:#444a44;">EACH</div>
<div class="a" style="left:851px;top:296.40px;line-height:12px;font-size:8.1px;color:#444a44;">08/24/2018</div>
<div class="a" style="left:898px;top:296.40px;line-height:12px;font-size:8.1px;color:#444a44;">08/14/2018</div>
<div class="a" style="left:945px;top:296.40px;line-height:12px;font-size:8.1px;color:#444a44;">LOC1</div>
<div class="a" style="left:986px;top:296.40px;line-height:12px;font-size:8.1px;color:#444a44;">CHRIS</div>
<div class="a" style="left:1027px;top:296.40px;line-height:12px;font-size:8.1px;color:#444a44;">BIKE</div>
<div class="a" style="left:424px;top:311px;width:7px;height:6px;border:1.3px solid #5a5e5a;background:#fff"></div>
<div class="a" style="left:442px;top:311px;width:7px;height:6px;border:1.3px solid #5a5e5a;background:#fff"></div>
<div class="a" style="left:456px;top:308.90px;line-height:12px;font-size:8.1px;color:#444a44;">P00004</div>
<div class="a" style="left:524px;top:308.90px;line-height:12px;font-size:8.1px;color:#444a44;">JS01&nbsp;&nbsp;/MAIN</div>
<div class="a" style="left:587px;top:308.90px;line-height:12px;font-size:8.1px;color:#444a44;">MBWH03</div>
<div class="a" style="left:455px;width:300px;text-align:right;top:308.90px;line-height:12px;font-size:8.1px;color:#444a44;">2520.0000</div>
<div class="a" style="left:512px;width:300px;text-align:right;top:308.90px;line-height:12px;font-size:8.1px;color:#444a44;">0.0000</div>
<div class="a" style="left:816px;top:308.90px;line-height:12px;font-size:8.1px;color:#444a44;">EACH</div>
<div class="a" style="left:851px;top:308.90px;line-height:12px;font-size:8.1px;color:#444a44;">08/31/2018</div>
<div class="a" style="left:898px;top:308.90px;line-height:12px;font-size:8.1px;color:#444a44;">08/21/2018</div>
<div class="a" style="left:945px;top:308.90px;line-height:12px;font-size:8.1px;color:#444a44;">LOC1</div>
<div class="a" style="left:986px;top:308.90px;line-height:12px;font-size:8.1px;color:#444a44;">CHRIS</div>
<div class="a" style="left:1027px;top:308.90px;line-height:12px;font-size:8.1px;color:#444a44;">BIKE</div>
<div class="a" style="left:424px;top:323px;width:7px;height:6px;border:1.3px solid #5a5e5a;background:#fff"></div>
<div class="a" style="left:442px;top:323px;width:7px;height:6px;border:1.3px solid #5a5e5a;background:#fff"></div>
<div class="a" style="left:456px;top:320.90px;line-height:12px;font-size:8.1px;color:#444a44;">P00005</div>
<div class="a" style="left:524px;top:320.90px;line-height:12px;font-size:8.1px;color:#444a44;">JS01&nbsp;&nbsp;/MAIN</div>
<div class="a" style="left:587px;top:320.90px;line-height:12px;font-size:8.1px;color:#444a44;">MBWH03</div>
<div class="a" style="left:455px;width:300px;text-align:right;top:320.90px;line-height:12px;font-size:8.1px;color:#444a44;">720.0000</div>
<div class="a" style="left:512px;width:300px;text-align:right;top:320.90px;line-height:12px;font-size:8.1px;color:#444a44;">0.0000</div>
<div class="a" style="left:816px;top:320.90px;line-height:12px;font-size:8.1px;color:#444a44;">EACH</div>
<div class="a" style="left:851px;top:320.90px;line-height:12px;font-size:8.1px;color:#444a44;">09/15/2018</div>
<div class="a" style="left:898px;top:320.90px;line-height:12px;font-size:8.1px;color:#444a44;">09/05/2018</div>
<div class="a" style="left:945px;top:320.90px;line-height:12px;font-size:8.1px;color:#444a44;">LOC1</div>
<div class="a" style="left:986px;top:320.90px;line-height:12px;font-size:8.1px;color:#444a44;">CHRIS</div>
<div class="a" style="left:1027px;top:320.90px;line-height:12px;font-size:8.1px;color:#444a44;">BIKE</div>
<div class="a" style="left:989.5px;width:200px;text-align:center;top:320.90px;line-height:12px;font-size:8.1px;color:#444a44;">70028</div>
<div class="a" style="left:424px;top:335px;width:7px;height:6px;border:1.3px solid #5a5e5a;background:#fff"></div>
<div class="a" style="left:442px;top:335px;width:7px;height:6px;border:1.3px solid #5a5e5a;background:#fff"></div>
<div class="a" style="left:456px;top:332.90px;line-height:12px;font-size:8.1px;color:#444a44;">P00006</div>
<div class="a" style="left:524px;top:332.90px;line-height:12px;font-size:8.1px;color:#444a44;">JS01&nbsp;&nbsp;/MAIN</div>
<div class="a" style="left:587px;top:332.90px;line-height:12px;font-size:8.1px;color:#444a44;">MBWH04</div>
<div class="a" style="left:455px;width:300px;text-align:right;top:332.90px;line-height:12px;font-size:8.1px;color:#444a44;">27.0000</div>
<div class="a" style="left:512px;width:300px;text-align:right;top:332.90px;line-height:12px;font-size:8.1px;color:#444a44;">0.0000</div>
<div class="a" style="left:816px;top:332.90px;line-height:12px;font-size:8.1px;color:#444a44;">EACH</div>
<div class="a" style="left:851px;top:332.90px;line-height:12px;font-size:8.1px;color:#444a44;">08/31/2018</div>
<div class="a" style="left:898px;top:332.90px;line-height:12px;font-size:8.1px;color:#444a44;">08/21/2018</div>
<div class="a" style="left:945px;top:332.90px;line-height:12px;font-size:8.1px;color:#444a44;">LOC1</div>
<div class="a" style="left:986px;top:332.90px;line-height:12px;font-size:8.1px;color:#444a44;">CHRIS</div>
<div class="a" style="left:1027px;top:332.90px;line-height:12px;font-size:8.1px;color:#444a44;">BIKE</div>
<div class="a" style="left:424px;top:347px;width:7px;height:6px;border:1.3px solid #5a5e5a;background:#fff"></div>
<div class="a" style="left:442px;top:347px;width:7px;height:6px;border:1.3px solid #5a5e5a;background:#fff"></div>
<div class="a" style="left:456px;top:344.90px;line-height:12px;font-size:8.1px;color:#444a44;">P00007</div>
<div class="a" style="left:524px;top:344.90px;line-height:12px;font-size:8.1px;color:#444a44;">JS01&nbsp;&nbsp;/MAIN</div>
<div class="a" style="left:587px;top:344.90px;line-height:12px;font-size:8.1px;color:#444a44;">MBWH04</div>
<div class="a" style="left:455px;width:300px;text-align:right;top:344.90px;line-height:12px;font-size:8.1px;color:#444a44;">12.0000</div>
<div class="a" style="left:512px;width:300px;text-align:right;top:344.90px;line-height:12px;font-size:8.1px;color:#444a44;">0.0000</div>
<div class="a" style="left:816px;top:344.90px;line-height:12px;font-size:8.1px;color:#444a44;">EACH</div>
<div class="a" style="left:851px;top:344.90px;line-height:12px;font-size:8.1px;color:#444a44;">09/15/2018</div>
<div class="a" style="left:898px;top:344.90px;line-height:12px;font-size:8.1px;color:#444a44;">09/05/2018</div>
<div class="a" style="left:945px;top:344.90px;line-height:12px;font-size:8.1px;color:#444a44;">LOC1</div>
<div class="a" style="left:986px;top:344.90px;line-height:12px;font-size:8.1px;color:#444a44;">CHRIS</div>
<div class="a" style="left:1027px;top:344.90px;line-height:12px;font-size:8.1px;color:#444a44;">BIKE</div>
<div class="a" style="left:989.5px;width:200px;text-align:center;top:344.90px;line-height:12px;font-size:8.1px;color:#444a44;">70028</div>
<div class="a" style="left:419px;top:283px;width:701px;height:1px;background:#a3a9a3"></div>
<div class="a" style="left:419px;top:295px;width:701px;height:1px;background:#a3a9a3"></div>
<div class="a" style="left:419px;top:308px;width:701px;height:1px;background:#a3a9a3"></div>
<div class="a" style="left:419px;top:320px;width:701px;height:1px;background:#a3a9a3"></div>
<div class="a" style="left:419px;top:332px;width:701px;height:1px;background:#a3a9a3"></div>
<div class="a" style="left:419px;top:344px;width:701px;height:1px;background:#a3a9a3"></div>
<div class="a" style="left:419px;top:356px;width:701px;height:1px;background:#a3a9a3"></div>
<div class="a" style="left:419px;top:368px;width:701px;height:1px;background:#a3a9a3"></div>
<div class="a" style="left:419px;top:380px;width:701px;height:1px;background:#a3a9a3"></div>
<div class="a" style="left:419px;top:392px;width:701px;height:1px;background:#a3a9a3"></div>
<div class="a" style="left:419px;top:404px;width:701px;height:1px;background:#a3a9a3"></div>
<div class="a" style="left:436px;top:271px;width:1px;height:145px;background:#979d97"></div>
<div class="a" style="left:454px;top:271px;width:1px;height:145px;background:#979d97"></div>
<div class="a" style="left:522px;top:271px;width:1px;height:145px;background:#979d97"></div>
<div class="a" style="left:585px;top:271px;width:1px;height:145px;background:#979d97"></div>
<div class="a" style="left:700px;top:271px;width:1px;height:145px;background:#979d97"></div>
<div class="a" style="left:757px;top:271px;width:1px;height:145px;background:#979d97"></div>
<div class="a" style="left:814px;top:271px;width:1px;height:145px;background:#979d97"></div>
<div class="a" style="left:849px;top:271px;width:1px;height:145px;background:#979d97"></div>
<div class="a" style="left:896px;top:271px;width:1px;height:145px;background:#979d97"></div>
<div class="a" style="left:943px;top:271px;width:1px;height:145px;background:#979d97"></div>
<div class="a" style="left:984px;top:271px;width:1px;height:145px;background:#979d97"></div>
<div class="a" style="left:1025px;top:271px;width:1px;height:145px;background:#979d97"></div>
<div class="a" style="left:1066px;top:271px;width:1px;height:145px;background:#979d97"></div>
<div class="a" style="left:1117px;top:271px;width:1px;height:145px;background:#979d97"></div>
<div class="a" style="left:419px;top:271px;width:2px;height:85px;background:#5d655d"></div>
<div class="a" style="left:436px;top:271px;width:2px;height:85px;background:#5d655d"></div>
<div class="a" style="left:454px;top:271px;width:2px;height:85px;background:#5d655d"></div>
<div class="a" style="left:419px;top:283px;width:35px;height:1.5px;background:#5d655d"></div>
<div class="a" style="left:419px;top:295px;width:35px;height:1.5px;background:#5d655d"></div>
<div class="a" style="left:419px;top:308px;width:35px;height:1.5px;background:#5d655d"></div>
<div class="a" style="left:419px;top:320px;width:35px;height:1.5px;background:#5d655d"></div>
<div class="a" style="left:419px;top:332px;width:35px;height:1.5px;background:#5d655d"></div>
<div class="a" style="left:419px;top:344px;width:35px;height:1.5px;background:#5d655d"></div>
<div class="a" style="left:419px;top:356px;width:35px;height:1.5px;background:#5d655d"></div>
<div class="a" style="left:419px;top:258.5px;width:712px;height:1.6px;background:#5a625a"></div>
<div class="a" style="left:419px;top:270px;width:698px;height:2px;background:#5a625a"></div>
<div class="a" style="left:418.5px;top:259px;width:2px;height:12px;background:#59615a"></div>
<div class="a" style="left:435.5px;top:259px;width:2px;height:12px;background:#59615a"></div>
<div class="a" style="left:453.5px;top:259px;width:2px;height:12px;background:#59615a"></div>
<div class="a" style="left:521.5px;top:259px;width:2px;height:12px;background:#59615a"></div>
<div class="a" style="left:584.5px;top:259px;width:2px;height:12px;background:#59615a"></div>
<div class="a" style="left:699.5px;top:259px;width:2px;height:12px;background:#59615a"></div>
<div class="a" style="left:756.5px;top:259px;width:2px;height:12px;background:#59615a"></div>
<div class="a" style="left:813.5px;top:259px;width:2px;height:12px;background:#59615a"></div>
<div class="a" style="left:848.5px;top:259px;width:2px;height:12px;background:#59615a"></div>
<div class="a" style="left:895.5px;top:259px;width:2px;height:12px;background:#59615a"></div>
<div class="a" style="left:942.5px;top:259px;width:2px;height:12px;background:#59615a"></div>
<div class="a" style="left:983.5px;top:259px;width:2px;height:12px;background:#59615a"></div>
<div class="a" style="left:1024.5px;top:259px;width:2px;height:12px;background:#59615a"></div>
<div class="a" style="left:1065.5px;top:259px;width:2px;height:12px;background:#59615a"></div>
<div class="a" style="left:1116.5px;top:259px;width:2px;height:12px;background:#59615a"></div>
<div class="a" style="left:419px;top:258px;width:1.5px;height:170px;background:#5a625a"></div>
<div class="a" style="left:1129.5px;top:258px;width:1.5px;height:170px;background:#7a807a"></div>
<div class="a" style="left:419px;top:427px;width:712px;height:1.5px;background:#5a625a"></div>
<div class="a" style="left:1118.5px;top:260px;width:11.5px;height:156px;background:#f4f4f4"></div>
<div class="a" style="left:1118.5px;top:260px;width:11.5px;height:11px;background:#f2f2f2;border-right:1px solid #aaa;border-bottom:1px solid #aaa"></div>
<svg style="left:1121px;top:264px" width="5" height="3"><path d="M0 3H5L2.5 0Z" fill="#8a8a8a"/></svg>
<div class="a" style="left:1118.5px;top:405px;width:11.5px;height:10px;background:#f2f2f2;border-right:2px solid #999"></div>
<svg style="left:1121px;top:409px" width="5" height="3"><path d="M0 0H5L2.5 3Z" fill="#8a8a8a"/></svg>
<div class="a" style="left:420px;top:416px;width:699px;height:11px;background:#f7f7f7"></div>
<div class="a" style="left:420px;top:416px;width:4px;height:11px;background:#0a0a0a"></div>
<div class="a" style="left:424px;top:416px;width:10px;height:11px;background:#f2f2f2;border-right:1px solid #bbb"></div>
<svg style="left:427px;top:420px" width="3" height="4"><path d="M3 0V4L0 2Z" fill="#999"/></svg>
<svg style="left:1113px;top:419px" width="3" height="4"><path d="M0 0V4L3 2Z" fill="#999"/></svg>
<div class="a" style="left:1118px;top:415px;width:13px;height:13px;background:#fff;border-top:1.5px solid #6a6a6a;border-left:1.5px solid #6a6a6a"></div>
<svg style="left:0;top:0" width="1285" height="697" viewBox="0 0 1285 697"><path d="M383.5 541 V515.5 H407" fill="none" stroke="#f6f6f6" stroke-width="1"/><path d="M383.5 541.5 H407.5 V515" fill="none" stroke="#d6d6d6" stroke-width="1"/><rect x="387" y="526.5" width="16.5" height="11.5" fill="#fbfbfb" stroke="#a8acb4" stroke-width="1"/><path d="M385.8 528 L395.2 519 L404.6 528" fill="none" stroke="#e8842e" stroke-width="3" stroke-linejoin="miter"/><rect x="392.3" y="529.6" width="5.8" height="6.2" fill="#8fa6c8" stroke="#6a82a8" stroke-width="0.7"/><path d="M395.2 529.6 V535.8" stroke="#e8eef8" stroke-width="0.8"/><path d="M412.5 519.5 H427 Q431 519.5 431 523.5 V534 L426.5 538.8 H412.5 Q410.8 538.8 410.8 537 V521.3 Q410.8 519.5 412.5 519.5 Z" fill="#8e8e8e"/><path d="M446 518.4 L455.2 529.8 H450.8 V537.7 H441.2 V529.8 H436.9 Z" fill="#cf8ee8" stroke="#b070d0" stroke-width="0.6"/><path d="M467 518.5 H476.2 V527.2 H480.7 L471.6 538.2 L462.5 527.2 H467 Z" fill="#8c8c8c"/><path d="M491 518 H503 V524 H507.3 V533 L504.5 538.5 H489.5 L486.4 533 V524 H491 Z" fill="#8e8e8e"/></svg>
<div class="a" style="left:294.5px;width:200px;text-align:center;top:539.60px;line-height:12px;font-size:6.2px;color:#4a4a4a;">Exit</div>
<div class="a" style="left:320.5px;width:200px;text-align:center;top:539.60px;line-height:12px;font-size:6.2px;color:#4a4a4a;">Generate</div>
<div class="a" style="left:345.5px;width:200px;text-align:center;top:539.60px;line-height:12px;font-size:6.2px;color:#4a4a4a;">All</div>
<div class="a" style="left:370.5px;width:200px;text-align:center;top:539.60px;line-height:12px;font-size:6.2px;color:#4a4a4a;">None</div>
<div class="a" style="left:396px;width:200px;text-align:center;top:539.60px;line-height:12px;font-size:6.2px;color:#4a4a4a;">Print</div>
<div class="a" style="left:416px;top:425.5px;width:473.5px;height:98px;background:linear-gradient(rgba(226,222,114,0.74),rgba(228,212,110,0.76));border:1.5px solid rgba(100,150,120,0.75);border-radius:4px;box-shadow:0 1px 3px rgba(120,200,180,0.35)"></div>
<div class="a" style="left:430.5px;top:445.50px;line-height:12px;font-size:8.1px;color:#545238;">Filter</div>
<div class="a" style="left:454px;top:443px;width:110px;height:14px;background:rgba(246,242,170,0.6);border-top:1px solid #9c9a70;border-left:1px solid #9c9a70;border-right:1px solid #f4f0c0;border-bottom:1px solid #f4f0c0"></div>
<div class="a" style="left:457px;top:445.30px;line-height:12px;font-size:8.1px;color:#47452f;">None</div>
<div class="a" style="left:551px;top:444px;width:12px;height:12px;background:#ece8a8;border-right:1px solid #8a8860;border-bottom:1px solid #8a8860"></div>
<svg style="left:554px;top:449px" width="6" height="4"><path d="M0 0H6L3 3.5Z" fill="#111"/></svg>
<div class="a" style="left:585px;top:445.50px;line-height:12px;font-size:8.1px;color:#545238;letter-spacing:-0.4px;">P/M</div>
<div class="a" style="left:600px;top:443px;width:105px;height:14px;background:rgba(246,242,170,0.6);border-top:1px solid #9c9a70;border-left:1px solid #9c9a70;border-right:1px solid #f4f0c0;border-bottom:1px solid #f4f0c0"></div>
<div class="a" style="left:603px;top:445.30px;line-height:12px;font-size:8.1px;color:#47452f;">Purchase Only</div>
<div class="a" style="left:692px;top:444px;width:12px;height:12px;background:#ece8a8;border-right:1px solid #8a8860;border-bottom:1px solid #8a8860"></div>
<svg style="left:695px;top:449px" width="6" height="4"><path d="M0 0H6L3 3.5Z" fill="#111"/></svg>
<div class="a" style="left:743px;top:440.5px;width:127px;height:18px;border:1px solid #c8c48a;border-top:none;border-bottom-color:#f0ecb0;border-right-color:#f0ecb0"></div>
<div class="a" style="left:743px;top:440.5px;width:5px;height:1px;background:#c8c48a"></div>
<div class="a" style="left:816px;top:440.5px;width:54px;height:1px;background:#c8c48a"></div>
<div class="a" style="left:750px;top:433.80px;line-height:12px;font-size:8.1px;color:#545238;">New Order Status</div>
<svg style="left:750px;top:447.5px" width="8" height="8" viewBox="0 0 8 8"><path d="M2.4 6.77 A3.2 3.2 0 1 1 6.77 2.4" fill="none" stroke="#5a5a48" stroke-width="1"/></svg>
<div class="a" style="left:761.5px;top:445.80px;line-height:12px;font-size:8.1px;color:#545238;">Accepted</div>
<svg style="left:813px;top:447.5px" width="8" height="8" viewBox="0 0 8 8"><path d="M2.4 6.77 A3.2 3.2 0 1 1 6.77 2.4" fill="none" stroke="#5a5a48" stroke-width="1"/><circle cx="4" cy="4" r="1.4" fill="#222"/></svg>
<div class="a" style="left:823.5px;top:445.80px;line-height:12px;font-size:8.1px;color:#545238;">Pending</div>
<div class="a" style="left:743px;top:466px;width:127px;height:18px;border:1px solid #c8c48a;border-top:none;border-bottom-color:#f0ecb0;border-right-color:#f0ecb0"></div>
<div class="a" style="left:743px;top:466px;width:5px;height:1px;background:#c8c48a"></div>
<div class="a" style="left:810px;top:466px;width:60px;height:1px;background:#c8c48a"></div>
<div class="a" style="left:750px;top:460.30px;line-height:12px;font-size:8.1px;color:#545238;">New Order Type</div>
<svg style="left:750px;top:472.5px" width="8" height="8" viewBox="0 0 8 8"><path d="M2.4 6.77 A3.2 3.2 0 1 1 6.77 2.4" fill="none" stroke="#5a5a48" stroke-width="1"/><circle cx="4" cy="4" r="1.4" fill="#222"/></svg>
<div class="a" style="left:761.5px;top:471.80px;line-height:12px;font-size:8.1px;color:#545238;">Purchase Order</div>
<svg style="left:825.5px;top:472.5px" width="8" height="8" viewBox="0 0 8 8"><path d="M2.4 6.77 A3.2 3.2 0 1 1 6.77 2.4" fill="none" stroke="#5a5a48" stroke-width="1"/></svg>
<div class="a" style="left:835.5px;top:471.80px;line-height:12px;font-size:8.1px;color:#545238;">Quote</div>
<div class="a" style="left:421.5px;top:490.60px;line-height:12px;font-size:8.1px;color:#545238;">Tagged</div>
<div class="a" style="left:454px;top:488.5px;width:47px;height:14px;border-top:1px solid #a8a678;border-left:1px solid #a8a678"></div>
<div class="a" style="left:198px;width:300px;text-align:right;top:490.50px;line-height:12px;font-size:8.1px;color:#545238;">0</div>
<div class="a" style="left:517px;top:488.5px;width:47px;height:14px;border-top:1px solid #a8a678;border-left:1px solid #a8a678"></div>
<div class="a" style="left:261px;width:300px;text-align:right;top:490.50px;line-height:12px;font-size:8.1px;color:#545238;">7</div>
<div class="a" style="left:505px;top:490.60px;line-height:12px;font-size:8.1px;color:#545238;">of</div>
<div class="a" style="left:600.5px;top:485px;width:7px;height:7px;border-top:1px solid #707050;border-left:1px solid #707050"></div>
<div class="a" style="left:611px;top:484.30px;line-height:12px;font-size:8.1px;color:#545238;">Show Blankets Only</div>
<div class="a" style="left:600.5px;top:496px;width:7px;height:7px;border-top:1px solid #707050;border-left:1px solid #707050"></div>
<div class="a" style="left:611px;top:495.40px;line-height:12px;font-size:8.1px;color:#545238;">Combine Dates</div>
<div class="a" style="left:716px;top:490.60px;line-height:12px;font-size:8.1px;color:#545238;">Purchase Orders Generated</div>
<div class="a" style="left:822.5px;top:488.5px;width:47px;height:14px;border-top:1px solid #a8a678;border-left:1px solid #a8a678"></div>
<div class="a" style="left:566.5px;width:300px;text-align:right;top:490.50px;line-height:12px;font-size:8.1px;color:#545238;">0</div>
<svg style="left:745px;top:667px" width="12" height="15" viewBox="0 0 12 15"><path d="M1.2 1.2 V10.2 L3.6 8.4 L5.2 11.8 L6.6 11.2 L5.1 7.9 H8.6 Z" fill="#fafafa" stroke="#6e6e6e" stroke-width="1.2" stroke-linejoin="round"/></svg>
</div>
</body></html>
